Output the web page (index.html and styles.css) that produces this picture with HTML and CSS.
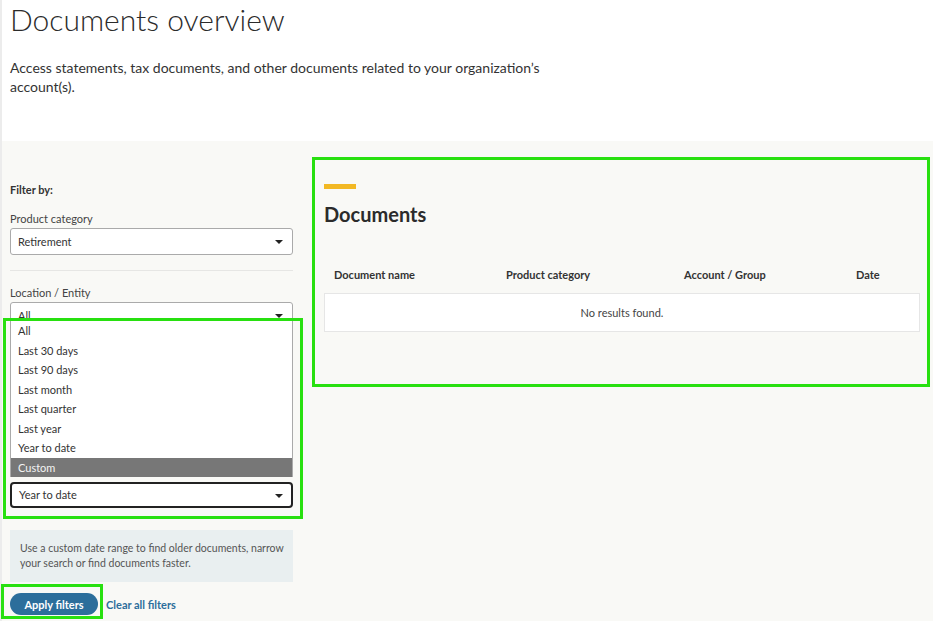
FILE: index.html
```html
<!DOCTYPE html>
<html lang="en">
<head>
    <meta charset="UTF-8">
    <meta name="viewport" content="width=device-width, initial-scale=1.0">
    <title>Documents overview</title>
    <link rel="stylesheet" href="styles.css">
</head>
<body>
    <div class="page">
        <div class="header">
            <h1>Documents overview</h1>
            <p>Access statements, tax documents, and other documents related to your organization’s account(s).</p>
        </div>

        <div class="main">
            <div class="filters">
                <div class="filter-title">Filter by:</div>

                <div class="form-group">
                    <label>Product category</label>
                    <div class="select">Retirement<span class="caret"></span></div>
                </div>

                <div class="divider"></div>

                <div class="form-group">
                    <label>Location / Entity</label>
                    <div class="select">All<span class="caret"></span></div>
                </div>

                <div class="date-group">
                    <ul class="options">
                        <li>All</li>
                        <li>Last 30 days</li>
                        <li>Last 90 days</li>
                        <li>Last month</li>
                        <li>Last quarter</li>
                        <li>Last year</li>
                        <li>Year to date</li>
                        <li class="active">Custom</li>
                    </ul>
                    <div class="select focused">Year to date<span class="caret"></span></div>
                    <div class="highlight hl-date"></div>
                </div>

                <div class="hint">
                    Use a custom date range to find older documents, narrow your search or find documents faster.
                </div>

                <div class="actions">
                    <button class="btn-apply">Apply filters</button>
                    <a href="#" class="link-clear">Clear all filters</a>
                    <div class="highlight hl-apply"></div>
                </div>
            </div>

            <div class="results">
                <div class="accent"></div>
                <h2>Documents</h2>
                <div class="table-head">
                    <span>Document name</span>
                    <span>Product category</span>
                    <span>Account / Group</span>
                    <span>Date</span>
                </div>
                <div class="empty">No results found.</div>
                <div class="highlight hl-results"></div>
            </div>
        </div>
    </div>
</body>
</html>
```

FILE: styles.css
```css
* {
    margin: 0;
    padding: 0;
    box-sizing: border-box;
}

body {
    font-family: Lato, "Noto Sans", sans-serif;
    color: #333;
    background: white;
    height: 621px;
    overflow: hidden;
}

.page {
    border-left: 2px solid #ececec;
    min-height: 621px;
}

.header {
    padding: 0 8px;
    height: 141px;
}

.header h1 {
    font-size: 30px;
    font-weight: 300;
    line-height: 38px;
    color: #2b2b2b;
}

.header p {
    margin-top: 20px;
    font-size: 14px;
    line-height: 19px;
    max-width: 570px;
    color: #333;
}

.main {
    background: #f9f9f6;
    display: grid;
    grid-template-columns: 283px 596px;
    gap: 31px;
    padding-left: 8px;
    min-height: 480px;
}

/* left column */
.filters {
    padding-top: 41px;
    font-size: 11px;
}

.filter-title {
    font-weight: 700;
    line-height: 16px;
    margin-bottom: 14px;
}

.form-group label {
    display: block;
    font-size: 11px;
    line-height: 14px;
    margin-bottom: 2px;
    color: #444;
}

.select {
    position: relative;
    height: 27px;
    background: white;
    border: 1px solid #aaa;
    border-radius: 3px;
    padding: 0 7px;
    font-size: 11px;
    line-height: 25px;
    color: #333;
}

.caret {
    position: absolute;
    right: 9px;
    top: 11px;
    border-left: 4px solid transparent;
    border-right: 4px solid transparent;
    border-top: 4px solid #222;
}

.divider {
    height: 1px;
    background: #e6e6e4;
    margin: 15px 0;
}

.date-group {
    position: relative;
    margin-top: -9px;
}

.options {
    list-style: none;
    background: white;
    border: 1px solid #aaa;
    border-bottom: none;
}

.options li {
    height: 19.5px;
    line-height: 19px;
    padding: 0 7px;
    font-size: 11px;
    color: #333;
}

.options li.active {
    background: #777;
    color: #f4f4f4;
}

.select.focused {
    margin-top: 5px;
    height: 26px;
    line-height: 22px;
    border: 2px solid #222;
    border-radius: 4px;
}

.select.focused .caret {
    top: 10px;
    right: 8px;
}

.hint {
    margin-top: 22px;
    background: #e9eff0;
    padding: 11px 5px 11px 10px;
    font-size: 10.5px;
    line-height: 15px;
    color: #555;
}

.actions {
    position: relative;
    display: flex;
    align-items: center;
    gap: 8px;
    margin-top: 11px;
}

.btn-apply {
    font-family: inherit;
    font-size: 11px;
    font-weight: 700;
    color: white;
    background: #2c6e9b;
    border: none;
    border-radius: 12px;
    width: 88px;
    height: 22px;
}

.link-clear {
    font-size: 11px;
    font-weight: 700;
    color: #2c6e9b;
    text-decoration: none;
}

/* right column */
.results {
    position: relative;
    padding-top: 43px;
}

.accent {
    width: 32px;
    height: 5px;
    background: #f2b824;
}

.results h2 {
    font-size: 20px;
    font-weight: 700;
    line-height: 26px;
    margin-top: 12px;
    color: #2b2b2b;
}

.table-head {
    display: grid;
    grid-template-columns: 172px 178px 172px 1fr;
    padding: 0 10px;
    margin-top: 40px;
    font-size: 11px;
    font-weight: 700;
    line-height: 16px;
    color: #333;
}

.empty {
    margin-top: 10px;
    background: white;
    border: 1px solid #e6e6e6;
    height: 39px;
    line-height: 37px;
    text-align: center;
    font-size: 11px;
    color: #444;
}

/* screenshot highlight frames */
.highlight {
    position: absolute;
    border: 3px solid #28e010;
    pointer-events: none;
}

.hl-date {
    left: -7px;
    top: -2px;
    width: 300px;
    height: 201px;
}

.hl-apply {
    left: -9px;
    top: -9px;
    width: 102px;
    height: 35px;
}

.hl-results {
    left: -12px;
    top: 16px;
    width: 618px;
    height: 230px;
}
```
